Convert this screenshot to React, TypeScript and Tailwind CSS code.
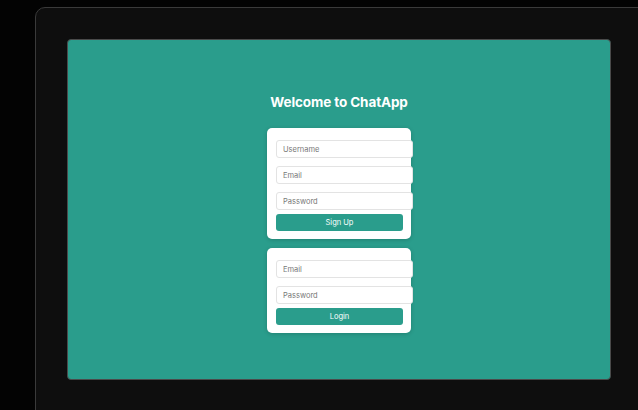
export default function App() {
  const inputCls =
    "block w-[137px] h-[18px] rounded-[3px] border border-[#e3e3e3] bg-white px-[6px] text-[7.5px] text-[#333] placeholder:text-[#777] outline-none";
  const cardCls =
    "w-[144px] rounded-[5px] bg-white pl-[9px] pt-[12px] pb-[8px] shadow-[0_1px_4px_rgba(0,0,0,0.18)]";
  const btnCls =
    "mt-[4px] block w-[127px] h-[17px] rounded-[3px] bg-[#2a9d8c] text-white text-[7.5px] font-normal";
  return (
    <div className="w-[638px] h-[410px] overflow-hidden bg-[#030303] pl-[35px] pt-[7px]" style={{ fontFamily: "Inter, 'Liberation Sans', sans-serif" }}>
      <div className="w-[640px] h-[440px] rounded-[10px] border border-[#3a3a3a] bg-[#0e0e0e] pl-[31px] pt-[31px]">
        <div className="w-[544px] h-[341px] rounded-[4px] border border-[#4a4a4a] bg-[#2a9d8c] flex flex-col items-center pt-[53px]">
          <h1 className="text-[13.5px] leading-[18px] font-bold text-white tracking-[-0.1px]">Welcome to ChatApp</h1>
          <div className={"mt-[17px] " + cardCls}>
            <input className={inputCls} placeholder="Username" />
            <input className={inputCls + " mt-[8px]"} placeholder="Email" />
            <input className={inputCls + " mt-[8px]"} placeholder="Password" type="password" />
            <button className={btnCls}>Sign Up</button>
          </div>
          <div className={"mt-[9px] " + cardCls}>
            <input className={inputCls} placeholder="Email" />
            <input className={inputCls + " mt-[8px]"} placeholder="Password" type="password" />
            <button className={btnCls}>Login</button>
          </div>
        </div>
      </div>
    </div>
  );
}
